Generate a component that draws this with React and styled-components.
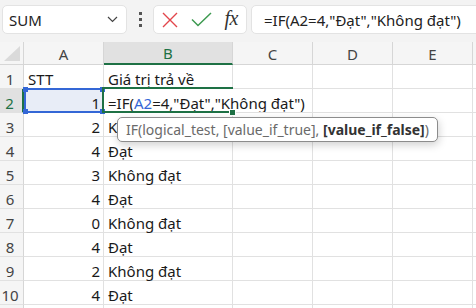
import React from "react";
import styled, { createGlobalStyle } from "styled-components";

const columns = ["A", "B", "C", "D", "E", "F"];

const rows = [
  ["STT", "Giá trị trả về"],
  [1, null],
  [2, "Không đạt"],
  [4, "Đạt"],
  [3, "Không đạt"],
  [4, "Đạt"],
  [0, "Không đạt"],
  [4, "Đạt"],
  [2, "Không đạt"],
  [4, "Đạt"],
  ["", ""],
];

function App() {
  return (
    <Page>
      <GlobalStyle />
      <Toolbar>
        <NameBox>
          <span>SUM</span>
          <svg width="11" height="7" viewBox="0 0 11 7">
            <polyline points="1,1 5.5,5.5 10,1" fill="none" stroke="#444" strokeWidth="1.2" />
          </svg>
        </NameBox>
        <Grip>
          <Dot />
          <Dot />
          <Dot />
        </Grip>
        <IconBox>
          <svg width="16" height="16" viewBox="0 0 16 16">
            <path d="M1 1 L15 15 M15 1 L1 15" stroke="#e2464b" strokeWidth="1.4" />
          </svg>
          <svg width="21" height="15" viewBox="0 0 21 15">
            <polyline points="1,7.5 7,13.5 20,1" fill="none" stroke="#3d9a50" strokeWidth="1.5" />
          </svg>
          <Fx>fx</Fx>
        </IconBox>
        <FormulaInput>=IF(A2=4,"Đạt","Không đạt")</FormulaInput>
      </Toolbar>

      <Sheet>
        <Corner>
          <Triangle />
        </Corner>
        {columns.map((c) => (
          <ColHeader key={c} $active={c === "B"}>
            {c}
          </ColHeader>
        ))}

        {rows.map(([a, b], i) => {
          const n = i + 1;
          const isEdit = n === 2;
          return (
            <React.Fragment key={n}>
              <RowHeader $active={isEdit}>{n}</RowHeader>
              <Cell $align={typeof a === "number" ? "right" : "left"} $fill={isEdit}>
                {a}
                {isEdit && (
                  <RefBox>
                    <Handle $x="left" $y="top" />
                    <Handle $x="right" $y="top" />
                    <Handle $x="left" $y="bottom" />
                    <Handle $x="right" $y="bottom" />
                  </RefBox>
                )}
              </Cell>
              <Cell $open={isEdit}>
                {isEdit ? (
                  <>
                    =IF(<RefText>A2</RefText>=4,"Đạt","Không đạt")
                    <ActiveBorder>
                      <FillHandle />
                    </ActiveBorder>
                  </>
                ) : (
                  b
                )}
              </Cell>
              <Cell />
              <Cell />
              <Cell />
              <Cell />
            </React.Fragment>
          );
        })}

        <Tip>
          IF(logical_test, [value_if_true], <b>[value_if_false]</b>)
        </Tip>
      </Sheet>
    </Page>
  );
}

const GlobalStyle = createGlobalStyle`
  html, body {
    margin: 0;
    padding: 0;
    background: #fff;
    overflow: hidden;
  }
  body {
    font-family: "Noto Sans", "Open Sans", sans-serif;
  }
`;

const Page = styled.div`
  width: 476px;
  height: 308px;
  overflow: hidden;
`;

const Toolbar = styled.div`
  height: 42px;
  background: #f3f3f3;
  display: flex;
  align-items: flex-start;
  padding: 5px 0 0 2px;
  box-sizing: border-box;
  overflow: hidden;
`;

const Box = styled.div`
  height: 29px;
  box-sizing: border-box;
  background: #fff;
  border: 1px solid #e3e3e3;
  border-radius: 5px;
  display: flex;
  align-items: center;
  flex-shrink: 0;
`;

const NameBox = styled(Box)`
  width: 125px;
  padding: 0 8px 0 6px;
  justify-content: space-between;
  font-size: 15px;
  color: #222;
`;

const Grip = styled.div`
  width: 26px;
  height: 29px;
  display: flex;
  flex-direction: column;
  align-items: center;
  justify-content: center;
  gap: 3px;
  flex-shrink: 0;
`;

const Dot = styled.span`
  width: 3px;
  height: 3px;
  background: #555;
`;

const IconBox = styled(Box)`
  width: 94px;
  padding: 0 8px 0 8px;
  justify-content: space-between;
`;

const Fx = styled.span`
  font-family: "Liberation Serif", "DejaVu Serif", serif;
  font-style: italic;
  font-size: 20px;
  color: #333;
  letter-spacing: -0.5px;
  margin-bottom: 2px;
`;

const FormulaInput = styled(Box)`
  width: 260px;
  margin-left: 4px;
  padding-left: 12px;
  font-size: 15px;
  color: #222;
  white-space: nowrap;
`;

const Sheet = styled.div`
  position: relative;
  display: grid;
  grid-template-columns: 24px 80px 129px 80px 80px 80px 40px;
  grid-template-rows: 23px repeat(11, 24px);
`;

const Corner = styled.div`
  background: #f5f5f5;
  border-right: 1px solid #d6d6d6;
  border-bottom: 1px solid #d6d6d6;
  display: flex;
  align-items: flex-end;
  justify-content: flex-end;
  padding: 0 3px 3px 0;
`;

const Triangle = styled.span`
  width: 16px;
  height: 15px;
  background: #dadada;
  clip-path: polygon(100% 0, 100% 100%, 0 100%);
`;

const ColHeader = styled.div`
  background: ${(p) => (p.$active ? "#e1e1e1" : "#f5f5f5")};
  border-right: 1px solid #d6d6d6;
  border-bottom: ${(p) => (p.$active ? "2px solid #1e7145" : "1px solid #d6d6d6")};
  color: ${(p) => (p.$active ? "#1e7145" : "#444")};
  display: flex;
  align-items: center;
  justify-content: center;
  font-size: 15px;
  padding-top: 1px;
`;

const RowHeader = styled.div`
  background: ${(p) => (p.$active ? "#e1e1e1" : "#f5f5f5")};
  border-right: ${(p) => (p.$active ? "2px solid #1e7145" : "1px solid #d6d6d6")};
  border-bottom: 1px solid #e1e1e1;
  color: ${(p) => (p.$active ? "#1e7145" : "#444")};
  font-size: 15px;
  line-height: 20px;
  padding: 4px 3px 0 0;
  text-align: center;
  box-sizing: border-box;
  overflow: hidden;
`;

const Cell = styled.div`
  position: relative;
  background: ${(p) => (p.$fill ? "#e8edf7" : "transparent")};
  border-right: 1px solid ${(p) => (p.$open ? "transparent" : "#e1e1e1")};
  border-bottom: 1px solid #e1e1e1;
  font-size: 15px;
  line-height: 20px;
  padding: 4px 3px 0 4px;
  color: #1a1a1a;
  text-align: ${(p) => p.$align || "left"};
  white-space: nowrap;
  box-sizing: border-box;
  min-width: 0;
`;

const RefText = styled.span`
  color: #3467d6;
`;

const RefBox = styled.div`
  position: absolute;
  left: 0;
  top: -1px;
  right: -1px;
  bottom: -1px;
  border: 2px solid #3467d6;
  z-index: 2;
`;

const Handle = styled.span`
  position: absolute;
  width: 5px;
  height: 5px;
  background: #3467d6;
  ${(p) => p.$x}: -3px;
  ${(p) => p.$y}: -3px;
`;

const ActiveBorder = styled.div`
  position: absolute;
  left: -2px;
  top: -2px;
  right: -1px;
  bottom: -1px;
  border: 2px solid #1e7145;
  border-right: none;
  z-index: 3;
`;

const FillHandle = styled.span`
  position: absolute;
  right: -3px;
  bottom: -5px;
  width: 5px;
  height: 5px;
  background: #1e7145;
  border: 1px solid #fff;
`;

const Tip = styled.div`
  position: absolute;
  left: 117px;
  top: 75px;
  height: 25px;
  box-sizing: border-box;
  padding: 0 8px;
  display: flex;
  align-items: center;
  background: #fff;
  border: 1px solid #8c8c8c;
  border-radius: 5px;
  box-shadow: 1px 3px 8px rgba(0, 0, 0, 0.18);
  font-size: 14px;
  color: #6a6a6a;
  white-space: pre;
  z-index: 4;

  b {
    color: #333;
    font-weight: 700;
  }
`;

export default App;
